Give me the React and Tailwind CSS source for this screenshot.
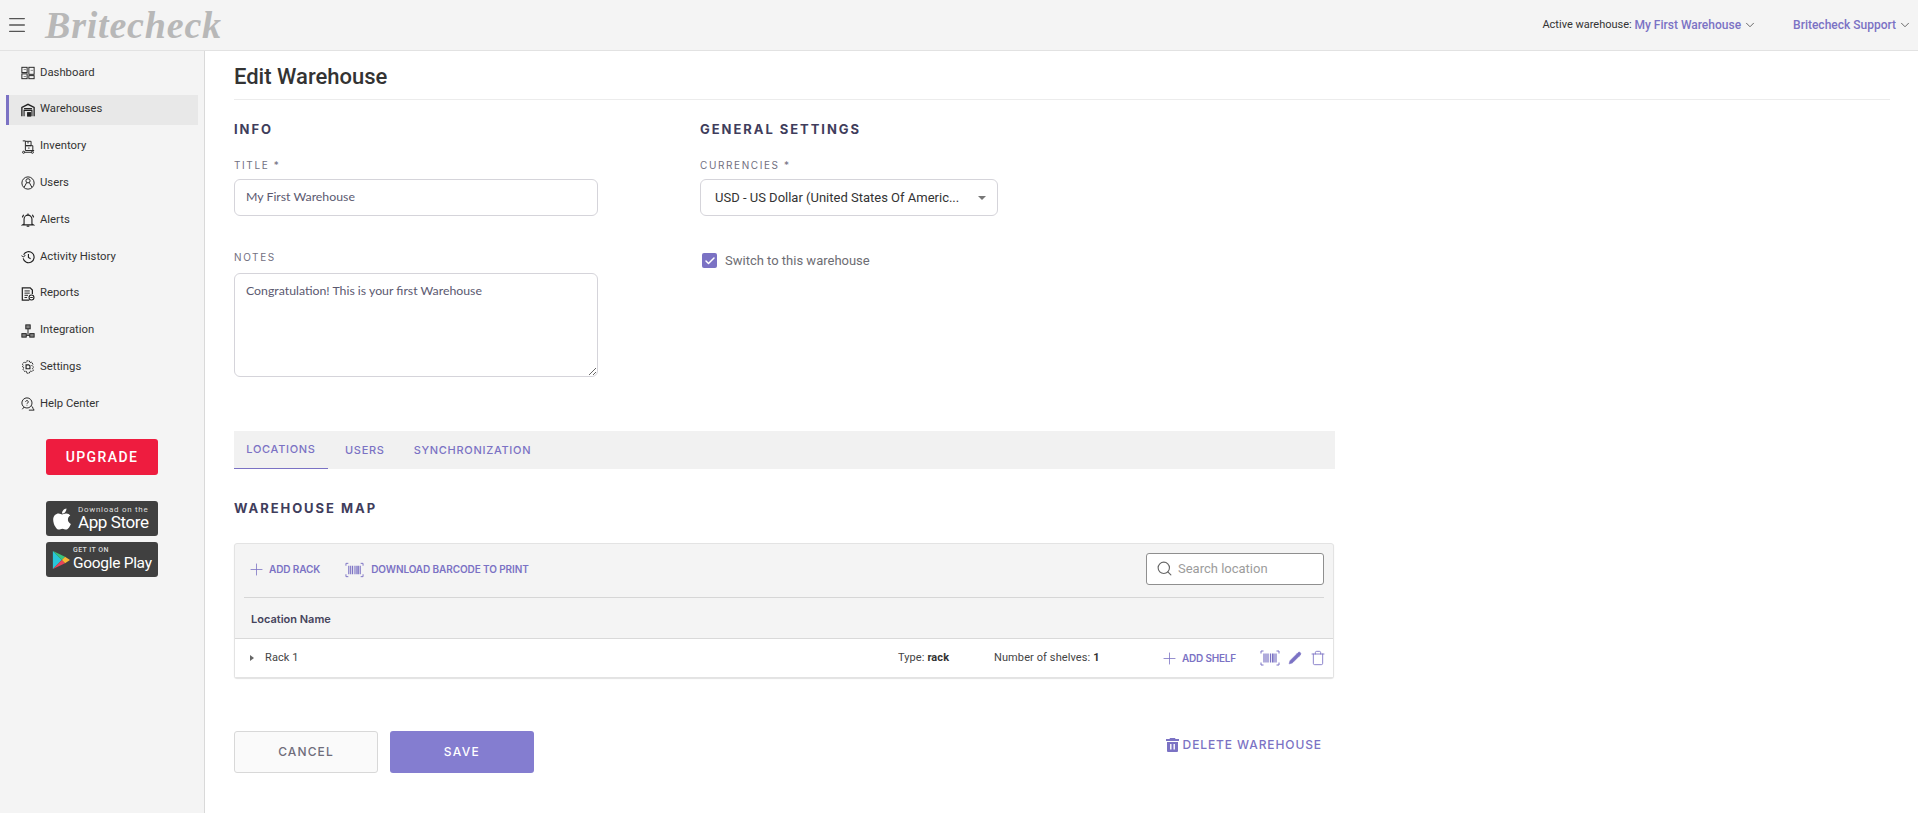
import React from 'react';
import { ChevronDown, Menu, Plus, Search, Pencil, Trash, Check } from 'lucide-react';
import { FaApple } from 'react-icons/fa';

const sw = { fill: 'none', stroke: 'currentColor', strokeWidth: 1.1 };

const NavIcon = ({ children }) => (
  <svg viewBox="0 0 16 16" className="w-[14px] h-[14px] shrink-0 text-[#222]" {...sw}>{children}</svg>
);

const DashboardIcon = () => (
  <NavIcon>
    <rect x="1" y="1.5" width="6" height="6" /><rect x="9" y="1.5" width="6" height="8" />
    <rect x="1" y="9" width="6" height="5.5" /><rect x="9" y="11" width="6" height="3.5" />
    <path d="M3 4h3M11 5h3M3 12h3" stroke="#888" />
  </NavIcon>
);
const WarehouseIcon = () => (
  <NavIcon>
    <path d="M1 15V5l7-3.5L15 5v10" strokeWidth="1.5" />
    <path d="M3.5 6.5h9M3.5 15V8.5h9V15" strokeWidth="1.3" />
    <rect x="7.5" y="11" width="3.5" height="4" fill="currentColor" />
  </NavIcon>
);
const InventoryIcon = () => (
  <NavIcon>
    <path d="M2 1h3v11h10M5.5 1.5h6v5h-6M5.5 6.5h8v5" />
    <path d="M8 2v2M9 8.5v1.5" />
    <circle cx="3" cy="14" r="1.2" /><circle cx="13" cy="14" r="1.2" /><path d="M4 14h8" />
  </NavIcon>
);
const UsersIcon = () => (
  <NavIcon>
    <circle cx="8" cy="8" r="7" />
    <circle cx="8" cy="5.5" r="2.4" />
    <path d="M3.5 13l3-5.500M12.5 13l-3-5.500" />
  </NavIcon>
);
const AlertsIcon = () => (
  <NavIcon>
    <path d="M3.5 12.5V7a4.5 4.5 0 0 1 9 0v5.5l1.5 1H2z" strokeWidth="1.3" />
    <path d="M6.5 15h3M8 .5v2M1.500 5l1.500-3M14.500 5L13 2" strokeWidth="1.3" />
  </NavIcon>
);
const HistoryIcon = () => (
  <NavIcon>
    <path d="M3 5.5A6.3 6.3 0 1 1 2.5 9.5" strokeWidth="1.3" />
    <path d="M.5 6.5L3 8l2-2.3" />
    <path d="M8.5 4.5v4l2.500 1.500" strokeWidth="1.3" />
  </NavIcon>
);
const ReportsIcon = () => (
  <NavIcon>
    <path d="M9.5 15h-8V1h9L13 3.5V8" strokeWidth="1.4" />
    <path d="M4 4.5h6M4 7h6M4 9.5h4M4 12h3" />
    <circle cx="12" cy="12" r="2.8" fill="white" strokeWidth="1.3" />
    <path d="M10.5 12h3" />
  </NavIcon>
);
const IntegrationIcon = () => (
  <NavIcon>
    <rect x="5.5" y="1" width="5" height="4.5" fill="currentColor" fillOpacity=".55" />
    <rect x="1" y="11" width="5" height="4" fill="currentColor" fillOpacity=".55" />
    <rect x="10" y="11" width="5" height="4" fill="currentColor" fillOpacity=".55" />
    <path d="M8 5.5V13M6 13h4" />
  </NavIcon>
);
const SettingsIcon = () => (
  <NavIcon>
    <path d="M6.5 1h3l.7 2 2-.6 1.5 2.600-1.400 1.500L14.500 8l-1.300 1.500 1 2.400-2 1.100-1.700-.4L9.500 15h-3l-.7-2.400-1.900.4-1.600-2.400 1-1.600L1.500 8l1-1.500-.9-1.900L3.500 2.500l2 .6z" strokeDasharray="2 .7" />
    <path d="M5.800 5.500h3l1.400 1.200v3.300H5.800z" strokeWidth="1.300" />
  </NavIcon>
);
const HelpIcon = () => (
  <NavIcon>
    <circle cx="6.8" cy="6.8" r="5.8" />
    <path d="M1.5 14l2-2.500M9 15h6l-1.300-2a4 4 0 0 0-2-3" />
    <path d="M5.3 5.500a1.500 1.500 0 1 1 2.300 1.300c-.6.400-.8.700-.8 1.400M6.800 9.500v.6" />
  </NavIcon>
);

const BarcodeIcon = ({ className }) => (
  <svg viewBox="0 0 20 16" className={className} fill="none" stroke="currentColor" strokeWidth="1">
    <path d="M3.5 1H1v2.500M16.500 1H19v2.500M3.500 15H1v-2.500M16.500 15H19v-2.500" />
    <path d="M4 3.500v9M6 3.500v9M8 3.500v9M10.500 3.500v9M12.500 3.500v9M14 3.500v9M16 3.500v9" strokeWidth="1.2" />
  </svg>
);

const BinIcon = () => (
  <svg viewBox="0 0 13 14" className="w-[13px] h-[14px] shrink-0">
    <path d="M4 0h5l.5 1H13v2H0V1h3.500z M1 4h11v9a1 1 0 0 1-1 1H2a1 1 0 0 1-1-1z" fill="#7b72c4" />
    <path d="M4.800 6v5.500M8.200 6v5.500" stroke="white" strokeWidth="1.4" />
  </svg>
);

const PlayIcon = () => (
  <svg viewBox="0 0 20 22" className="w-[18px] h-[20px] shrink-0">
    <path d="M1 1v20l10-10z" fill="#29c5d8" />
    <path d="M1 1l10 10 3.500-3.500z" fill="#39c47c" />
    <path d="M1 21l10-10 3.500 3.500z" fill="#e8445a" />
    <path d="M14.500 7.500L11 11l3.500 3.500L20 11z" fill="#f7b733" />
  </svg>
);

const navItems = [
  { label: 'Dashboard', icon: DashboardIcon },
  { label: 'Warehouses', icon: WarehouseIcon, active: true },
  { label: 'Inventory', icon: InventoryIcon },
  { label: 'Users', icon: UsersIcon },
  { label: 'Alerts', icon: AlertsIcon },
  { label: 'Activity History', icon: HistoryIcon },
  { label: 'Reports', icon: ReportsIcon },
  { label: 'Integration', icon: IntegrationIcon },
  { label: 'Settings', icon: SettingsIcon },
  { label: 'Help Center', icon: HelpIcon },
];

const Sidebar = () => (
  <aside className="w-[205px] shrink-0 bg-[#f4f4f4] border-r border-[#d9d9d9] pt-[7px]">
    <nav className="flex flex-col gap-[6.8px]">
      {navItems.map(({ label, icon: Icon, active }) => (
        <div
          key={label}
          className={`ml-[6px] w-[192px] h-[30px] flex items-center gap-[5px] pl-[12px] border-l-[3px] text-[11.3px] text-[#333] ${active ? 'bg-[#e8e8e8] border-[#7b72c4]' : 'border-transparent'}`}
        >
          <Icon />
          <span>{label}</span>
        </div>
      ))}
    </nav>
    <div className="ml-[46px] w-[112px] mt-[20px] flex flex-col">
      <button className="h-[36px] rounded-[3px] bg-[#ee1c3f] text-white text-[14px] font-medium tracking-[1.4px]">UPGRADE</button>
      <div className="mt-[26px] h-[35px] rounded-[3px] bg-[#404040] text-white flex items-center pl-[6px] gap-[6px]">
        <FaApple className="w-[20px] h-[24px] shrink-0" />
        <div className="flex flex-col leading-none">
          <span className="text-[8px] tracking-[.7px] text-[#ddd]">Download on the</span>
          <span className="text-[17px] leading-[17px] tracking-[-.4px]">App Store</span>
        </div>
      </div>
      <div className="mt-[6px] h-[35px] rounded-[3px] bg-[#404040] text-white flex items-center pl-[6px] gap-[3px]">
        <PlayIcon />
        <div className="flex flex-col leading-none">
          <span className="text-[7px] font-medium tracking-[.4px] text-[#ddd]">GET IT ON</span>
          <span className="text-[15.5px] leading-[18px] tracking-[-.3px]">Google Play</span>
        </div>
      </div>
    </div>
  </aside>
);

const Header = () => (
  <header className="h-[51px] shrink-0 bg-[#f4f4f4] border-b border-[#e2e2e2] flex items-center pl-[6px] pr-[6px]">
    <Menu className="w-[22px] h-[22px] text-[#555]" strokeWidth={1.4} />
    <span className="ml-[17px] font-['Liberation_Serif',serif] italic font-bold text-[38px] leading-none tracking-[.8px] text-[#b8b8b8]">Britecheck</span>
    <div className="ml-auto flex items-center text-[12px]">
      <span className="text-[11px] text-[#333]">Active warehouse:&nbsp;</span>
      <span className="text-[#7b72c4] font-medium">My First Warehouse</span>
      <ChevronDown className="ml-[2px] w-[14px] h-[14px] text-[#555]" strokeWidth={1.5} />
      <span className="ml-[36px] text-[#7b72c4] font-medium">Britecheck Support</span>
      <ChevronDown className="ml-[2px] w-[14px] h-[14px] text-[#555]" strokeWidth={1.5} />
    </div>
  </header>
);

const SectionTitle = ({ children, className = '' }) => (
  <h2 className={`font-['Inter',sans-serif] text-[13px] leading-[16px] font-bold tracking-[1.95px] text-[#3f3d5c] ${className}`}>{children}</h2>
);

const FieldLabel = ({ children, className = '' }) => (
  <label className={`block font-['Inter',sans-serif] text-[10px] leading-[12px] tracking-[1.6px] text-[#72707f] ${className}`}>{children}</label>
);

const WarehouseForm = () => (
  <div className="flex pt-[21px]">
    <div className="w-[466px] shrink-0">
      <SectionTitle>INFO</SectionTitle>
      <FieldLabel className="mt-[22px]">TITLE *</FieldLabel>
      <div className="mt-[8px] w-[364px] h-[37px] border border-[#d5d4da] rounded-[6px] flex items-center px-[11px] font-['Lato',sans-serif] text-[12.3px] text-[#5b5970]">My First Warehouse</div>
      <FieldLabel className="mt-[35px]">NOTES</FieldLabel>
      <textarea
        readOnly
        defaultValue="Congratulation! This is your first Warehouse"
        className="mt-[10px] block w-[364px] h-[104px] border border-[#d5d4da] rounded-[6px] px-[11px] py-[8px] font-['Lato',sans-serif] text-[12.3px] text-[#5b5970] outline-none"
      />
    </div>
    <div>
      <SectionTitle>GENERAL SETTINGS</SectionTitle>
      <FieldLabel className="mt-[22px]">CURRENCIES *</FieldLabel>
      <div className="mt-[8px] w-[298px] h-[37px] border border-[#d5d4da] rounded-[6px] flex items-center pl-[14px] pr-[11px] text-[13px] text-[#333]">
        <span>USD - US Dollar (United States Of Americ...</span>
        <span className="ml-auto w-0 h-0 border-x-[4px] border-x-transparent border-t-[4px] border-t-[#777]" />
      </div>
      <div className="mt-[35px] ml-[2px] flex items-center gap-[8px]">
        <span className="w-[15px] h-[15px] rounded-[2px] bg-[#7b72c4] flex items-center justify-center">
          <Check className="w-[12px] h-[12px] text-white" strokeWidth={3} />
        </span>
        <span className="text-[13px] text-[#6d6d73]">Switch to this warehouse</span>
      </div>
    </div>
  </div>
);

const Tabs = () => (
  <div className="mt-[54px] w-[1101px] h-[38px] bg-[#f1f1f1] flex font-['Inter',sans-serif] text-[11px] font-medium tracking-[.7px] text-[#7b72c4]">
    <div className="w-[94px] flex items-center justify-center border-b border-[#7b72c4]">LOCATIONS</div>
    <div className="ml-[17px] flex items-center">USERS</div>
    <div className="ml-[29px] flex items-center">SYNCHRONIZATION</div>
  </div>
);

const LocationCard = () => (
  <div className="mt-[27px] w-[1100px] rounded-[3px] border border-[#e3e3e3] bg-[#f4f4f4] shadow-[0_1px_1px_rgba(0,0,0,.12)]">
    <div className="mx-[9px] h-[54px] pb-[2px] border-b border-[#d6d6d6] flex items-center text-[#7b72c4]">
      <Plus className="ml-[3px] w-[19px] h-[19px]" strokeWidth={1} />
      <span className="ml-[3px] font-['Inter',sans-serif] text-[10px] tracking-[-.1px] font-semibold">ADD RACK</span>
      <BarcodeIcon className="ml-[25px] w-[19px] h-[16px]" />
      <span className="ml-[7px] font-['Inter',sans-serif] text-[10px] tracking-[-.1px] font-semibold">DOWNLOAD BARCODE TO PRINT</span>
      <div className="ml-auto w-[178px] h-[32px] mb-[2px] bg-white border border-[#8f8f8f] rounded-[3px] flex items-center pl-[9px] gap-[5px]">
        <Search className="w-[17px] h-[17px] text-[#666]" strokeWidth={1.6} />
        <span className="text-[13px] text-[#9c9c9c]">Search location</span>
      </div>
    </div>
    <div className="h-[40px] pt-[2px] flex items-center pl-[16px] font-['Inter',sans-serif] text-[11px] font-semibold text-[#45435c]">Location Name</div>
    <div className="h-[39px] bg-white border-t border-[#d9d9d9] flex items-center text-[11px] tracking-[.1px] text-[#444]">
      <span className="ml-[15px] w-0 h-0 border-y-[3.5px] border-y-transparent border-l-[4px] border-l-[#666]" />
      <span className="ml-[11px]">Rack 1</span>
      <span className="ml-auto w-[96px]">Type: <b className="font-bold text-[#333]">rack</b></span>
      <span className="w-[166px]">Number of shelves: <b className="font-bold text-[#333]">1</b></span>
      <span className="flex items-center text-[#7b72c4]">
        <Plus className="w-[19px] h-[19px]" strokeWidth={1} />
        <span className="ml-[3px] font-['Inter',sans-serif] text-[10px] tracking-[-.2px] font-semibold">ADD SHELF</span>
        <BarcodeIcon className="ml-[24px] w-[20px] h-[16px]" />
        <Pencil className="ml-[8px] w-[14px] h-[14px] fill-[#7b72c4]" strokeWidth={1} />
        <Trash className="ml-[8px] mr-[7px] w-[16px] h-[16px]" strokeWidth={1.3} />
      </span>
    </div>
  </div>
);

const Footer = () => (
  <div className="mt-[53px] w-[1100px] flex items-center font-['Inter',sans-serif]">
    <button className="w-[144px] h-[42px] bg-[#fafafa] border border-[#d8d8d8] rounded-[3px] text-[12px] font-medium tracking-[1.1px] text-[#6f6d7a]">CANCEL</button>
    <button className="ml-[12px] w-[144px] h-[42px] bg-[#847dd0] rounded-[3px] text-[12px] font-medium tracking-[1.3px] text-white">SAVE</button>
    <div className="ml-auto mr-[12px] mb-[14px] flex items-center text-[#7b72c4] text-[12px] font-medium tracking-[.9px]">
      <BinIcon />
      <span className="ml-[4px]">DELETE WAREHOUSE</span>
    </div>
  </div>
);

export default function App() {
  return (
    <div className="h-[813px] flex flex-col overflow-hidden bg-white font-['Roboto',sans-serif]">
      <Header />
      <div className="flex flex-1 min-h-0">
        <Sidebar />
        <main className="flex-1 pl-[29px] pr-[28px]">
          <div className="h-[49px] pt-[4px] border-b border-[#ececec] flex items-center">
            <h1 className="text-[22px] font-medium text-[#333] leading-none">Edit Warehouse</h1>
          </div>
          <WarehouseForm />
          <Tabs />
          <SectionTitle className="mt-[31px]">WAREHOUSE MAP</SectionTitle>
          <LocationCard />
          <Footer />
        </main>
      </div>
    </div>
  );
}
